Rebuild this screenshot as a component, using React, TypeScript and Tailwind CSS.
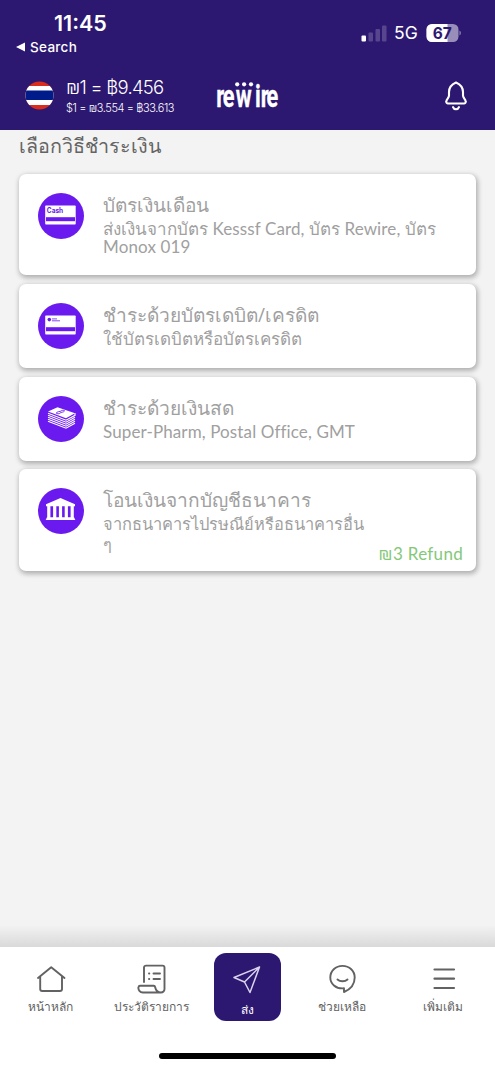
import React from 'react';
import type { ReactNode } from 'react';

interface MethodProps {
  icon: ReactNode;
  title: ReactNode;
  lines: ReactNode[];
  className: string;
  lineClass?: string;
  refund?: string;
}

const CardIcon = ({ cash }: { cash?: boolean }) => (
  <svg width="46" height="46" viewBox="0 0 46 46">
    <circle cx="23" cy="23" r="23" fill="#6a1aee" />
    <rect x="7.2" y="12.4" width="30.5" height="19.2" rx="0.8" fill="#fff" />
    <rect x="8" y="24.2" width="29" height="4" fill="#6a1aee" />
    {cash ? (
      <text x="8.8" y="20.2" fontSize="7" fontWeight="700" fontFamily="Inter" fill="#6a1aee" textLength="16.4" lengthAdjust="spacingAndGlyphs">Cash</text>
    ) : (
      <>
        <circle cx="11.3" cy="16.6" r="1.8" fill="#6a1aee" />
        <path d="M14 15.9h5M14 17.8h8" stroke="#6a1aee" strokeWidth="0.8" />
      </>
    )}
  </svg>
);

const MoneyIcon = () => (
  <svg width="46" height="46" viewBox="0 0 46 46">
    <circle cx="23" cy="23" r="23" fill="#6a1aee" />
    <path d="M10 15.4L19.5 11.3L37 17.2L28 22.3Z" fill="#fff" />
    <path d="M18.2 17.2c1-2.2 4-1.3 4.8-2.2s2.5-.8 3.6-.2c-1 1.8-3.5 1.2-4.5 2.2s-2.6.9-3.9.2Z" fill="none" stroke="#6a1aee" strokeWidth="0.9" />
    <g fill="none" stroke="#fff" strokeWidth="1.15">
      <path d="M10 17.2L28 24.2L37 19.3V17" />
      <path d="M10 19.2L28 26.2L37 21.3" />
      <path d="M10 21.2L28 28.2L37 23.3" />
      <path d="M10 23.2L28 30.2L37 25.3" />
      <path d="M10 25.2L28 32.2L37 27.3" />
    </g>
  </svg>
);

const BankIcon = () => (
  <svg width="46" height="46" viewBox="0 0 46 46">
    <circle cx="23" cy="23" r="23" fill="#6a1aee" />
    <path d="M22.5 10L37 16.3V18.2H8V16.3Z" fill="#fff" />
    <path d="M10.8 18v12M16.7 18v12M22.5 18v12M28.3 18v12M34.2 18v12" stroke="#fff" strokeWidth="3.2" />
    <path d="M9 29.3h27l1.3 2.7H7.7Z" fill="#fff" />
  </svg>
);

const Method = ({ icon, title, lines, className, lineClass = 'text-[17px]', refund }: MethodProps) => (
  <section className={`relative flex w-[457px] shrink-0 rounded-[7px] bg-white pl-[19px] pt-[19px] shadow-[1px_2px_5px_1px_rgba(0,0,0,0.28)] ${className}`}>
    <div className="h-[46px] w-[46px] shrink-0">{icon}</div>
    <div className="ml-[19px] whitespace-nowrap text-[#a0a0a0]">
      <h2 className="-mt-px mb-[1.5px] flex h-[26px] items-center text-[19.1px] leading-[26px]">{title}</h2>
      {lines.map((line, i) => (
        <p key={i} className={`h-[18px] leading-[18px] ${lineClass}`}>{line}</p>
      ))}
    </div>
    {refund && <span className="absolute bottom-[7px] right-[13px] font-['Lato','Open_Sans',sans-serif] text-[17px] leading-5 tracking-[0.3px] text-[#84c878]">{refund}</span>}
  </section>
);

// Latin words inside the Thai copy
const Latin = ({ children }: { children: ReactNode }) => (
  <span className="font-['Lato',sans-serif] tracking-[0.12px]">{children}</span>
);

const navStroke = { fill: 'none', stroke: '#626262', strokeWidth: 1.9, strokeLinecap: 'round', strokeLinejoin: 'round' } as const;

const tabs = [
  {
    label: 'หน้าหลัก',
    icon: <path d="M2 14L15.2 3.2L28.5 14M4.2 12.5V25a2 2 0 0 0 2 2H24a2 2 0 0 0 2-2V12.5" {...navStroke} />,
  },
  {
    label: 'ประวัติรายการ',
    icon: (
      <g {...navStroke}>
        <path d="M7 18V3.6a2 2 0 0 1 2-2h16.5a2 2 0 0 1 2 2V25a3.5 3.5 0 0 1-3.5 3.5H6a4.5 4.5 0 0 1-4.5-5.5a1.5 1.5 0 0 1 1.5-1.2H16.5a1.5 1.5 0 0 1 1.6 1.2c.6 3 2.4 5.5 5.9 5.5" />
        <path d="M12 9.5h.3M16.5 9.5H23M12 15h.3M16.5 15H23" />
      </g>
    ),
  },
];

const App = () => (
  <div className="flex h-[1070px] w-[495px] flex-col overflow-hidden bg-[#f3f3f3] font-['Open_Sans','Noto_Sans',sans-serif]">
    {/* HEADER */}
    <header className="h-[130px] shrink-0 bg-[#2d1871] text-white">
      <div className="flex h-[60px] justify-between">
        <div className="pt-[11px] font-['Inter',sans-serif]">
          <div className="pl-[54px] text-[21.5px] font-semibold leading-[24px]">11:45</div>
          <div className="flex items-center pl-4 pt-[4px] text-[13.5px] font-medium leading-4 tracking-[0.3px]">
            <svg width="9" height="10" viewBox="0 0 9 10" className="mr-[5px]"><path d="M0 5L9 0.5V9.5Z" fill="#fff" /></svg>
            Search
          </div>
        </div>
        <div className="mt-6 flex h-[18px] items-center pr-[33px] font-['Inter',sans-serif]">
          <svg width="26" height="17" viewBox="0 0 26 17">
            <rect x="0.5" y="10.5" width="4.5" height="6" rx="1" fill="#fff" />
            <rect x="7.5" y="7.5" width="4.5" height="9" rx="1" fill="#57468e" />
            <rect x="14.5" y="4" width="4.5" height="12.5" rx="1" fill="#57468e" />
            <rect x="21" y="0.5" width="4.5" height="16" rx="1" fill="#57468e" />
          </svg>
          <span className="ml-[7px] mt-px w-[25px] text-[17.5px]">5G</span>
          <svg width="36" height="18" viewBox="0 0 36 18" className="ml-[7px]">
            <rect x="0.5" width="32" height="18" rx="5.5" fill="#988eb9" />
            <path d="M6 0H21.5V18H6A5.5 5.5 0 0 1 0.5 12.5V5.5A5.5 5.5 0 0 1 6 0Z" fill="#fff" />
            <path d="M33.5 6.5a3 3 0 0 1 0 5Z" fill="#988eb9" />
            <text x="16.2" y="14.5" textAnchor="middle" fontSize="15.5" fontWeight="700" fill="#2d1871">67</text>
          </svg>
        </div>
      </div>
      <div className="flex h-[70px] items-center pl-[25px] pr-7">
        <svg width="29" height="29" viewBox="0 0 29 29">
          <clipPath id="flag"><circle cx="14.5" cy="14.5" r="14" /></clipPath>
          <g clipPath="url(#flag)">
            <rect width="29" height="29" fill="#d92d1e" />
            <rect y="5" width="29" height="19" fill="#fff" />
            <rect y="9.5" width="29" height="9.5" fill="#001b8a" />
          </g>
        </svg>
        <div className="ml-3 w-[150px] whitespace-nowrap font-['Inter','DejaVu_Sans',sans-serif] font-light">
          <div className="text-[18.5px] leading-[24px] tracking-[-0.75px]">₪1 = ฿9.456</div>
          <div className="mt-px text-[11px] leading-4 tracking-[-0.4px]">$1 = ₪3.554 = ฿33.613</div>
        </div>
        {/* logo: condensed wordmark under a row of dots */}
        <svg width="64" height="40" viewBox="0 0 64 40" className="overflow-visible">
          <text transform="scale(.7 1)" x="0.3 9.8 28.3 55.7 63.8 72.3" y="32" fontFamily="Roboto" fontSize="31" fontWeight="700" fill="#fff" stroke="#fff" strokeWidth="0.3">rewire</text>
          <g fill="#fff">
            <circle cx="21.2" cy="9.3" r="2.1" />
            <circle cx="28.1" cy="9.3" r="2.1" />
            <circle cx="35" cy="9.3" r="2.1" />
          </g>
        </svg>
        <svg width="22" height="30" viewBox="0 0 22 30" fill="none" stroke="#fff" strokeWidth="2.1" strokeLinecap="round" strokeLinejoin="round" className="ml-auto mt-px">
          <path d="M11 1.5C6.5 3.5 4 6.5 4 11V14.5C4 17 1.5 18 1.3 20.5A1.7 1.7 0 0 0 3 22.5H19A1.7 1.7 0 0 0 20.7 20.5C20.5 18 18 17 18 14.5V11C18 6.5 15.5 3.5 11 1.5Z" />
          <path d="M8 26.2a3.2 3.2 0 0 0 6 0" />
        </svg>
      </div>
    </header>

    {/* PAYMENT METHODS */}
    <main className="flex grow flex-col pl-[19px]">
      <h1 className="mb-[12px] flex h-[32px] items-center whitespace-nowrap text-[19.7px] text-[#646464]">เลือกวิธีชำระเงิน</h1>
      <div className="flex flex-col">
        <Method
          className="mb-[9px] h-[101px]"
          icon={<CardIcon cash />}
          title="บัตรเงินเดือน"
          lines={[
            <>ส่งเงินจากบัตร <Latin>Kesssf Card,</Latin> บัตร <Latin>Rewire,</Latin> บัตร</>,
            <Latin>Monox 019</Latin>,
          ]}
        />
        <Method className="mb-[9px] h-[84px]" icon={<CardIcon />} title="ชำระด้วยบัตรเดบิต/เครดิต" lines={['ใช้บัตรเดบิตหรือบัตรเครดิต']} />
        <Method className="mb-[8px] h-[84px]" icon={<MoneyIcon />} title="ชำระด้วยเงินสด" lines={[<Latin>Super-Pharm, Postal Office, GMT</Latin>]} />
        <Method
          className="h-[102px]"
          icon={<BankIcon />}
          title="โอนเงินจากบัญชีธนาคาร"
          lines={['จากธนาคารไปรษณีย์หรือธนาคารอื่น', <span className="inline-block pt-[2px]">ๆ</span>]}
          lineClass="text-[16.4px]"
          refund="₪3 Refund"
        />
      </div>
    </main>
    <div className="h-[22px] shrink-0 bg-linear-to-b from-[#f3f3f3] to-[#d9d9d9]" />

    {/* TAB BAR */}
    <footer className="flex h-[123px] shrink-0 flex-col bg-white">
      <nav className="flex h-[106px] text-[12px] text-[#626262]">
        {tabs.map((tab) => (
          <div key={tab.label} className="flex w-[101px] flex-col items-center pt-[17px]">
            <svg width="30" height="30" viewBox="0 0 30 30">{tab.icon}</svg>
            <span className="mt-[4px] whitespace-nowrap leading-[18px]">{tab.label}</span>
          </div>
        ))}
        <div className="ml-3 mt-[6px] flex h-[68px] w-[67px] flex-col items-center rounded-[12px] bg-[#2d1871] text-white">
          <svg width="28" height="28" viewBox="0 0 28 28" className="mt-[13px] -ml-[2px]" fill="none" stroke="#d9d3ec" strokeWidth="1.5" strokeLinejoin="round">
            <path d="M26.5 1L1 11.5L11.5 16L17 26.5ZM26.5 1L11.5 16" />
          </svg>
          <span className="mt-[7px] leading-[18px]">ส่ง</span>
        </div>
        <div className="ml-3 flex w-[98px] flex-col items-center pt-[17px]">
          <svg width="30" height="30" viewBox="0 0 30 30">
            <path d="M17 28V24.3C8.5 25 3.3 19.5 3.3 13.5C3.3 7 8.5 1.9 15.5 1.9S27.7 7 27.7 13.5C27.7 20 23.5 25.3 17 28M10.5 15.5c2.5 2.4 7.5 2.4 10 0" {...navStroke} />
          </svg>
          <span className="mt-[4px] whitespace-nowrap leading-[18px]">ช่วยเหลือ</span>
        </div>
        <div className="flex w-[104px] flex-col items-center pt-[17px]">
          <svg width="30" height="30" viewBox="0 0 30 30">
            <path d="M6.5 5.5H26M6.5 14.7H26M6.5 24H26" {...navStroke} strokeWidth={2.2} />
          </svg>
          <span className="mt-[4px] whitespace-nowrap leading-[18px]">เพิ่มเติม</span>
        </div>
      </nav>
      <div className="mx-auto h-[6px] w-[177px] rounded-full bg-black" />
    </footer>
  </div>
);

export default App;
